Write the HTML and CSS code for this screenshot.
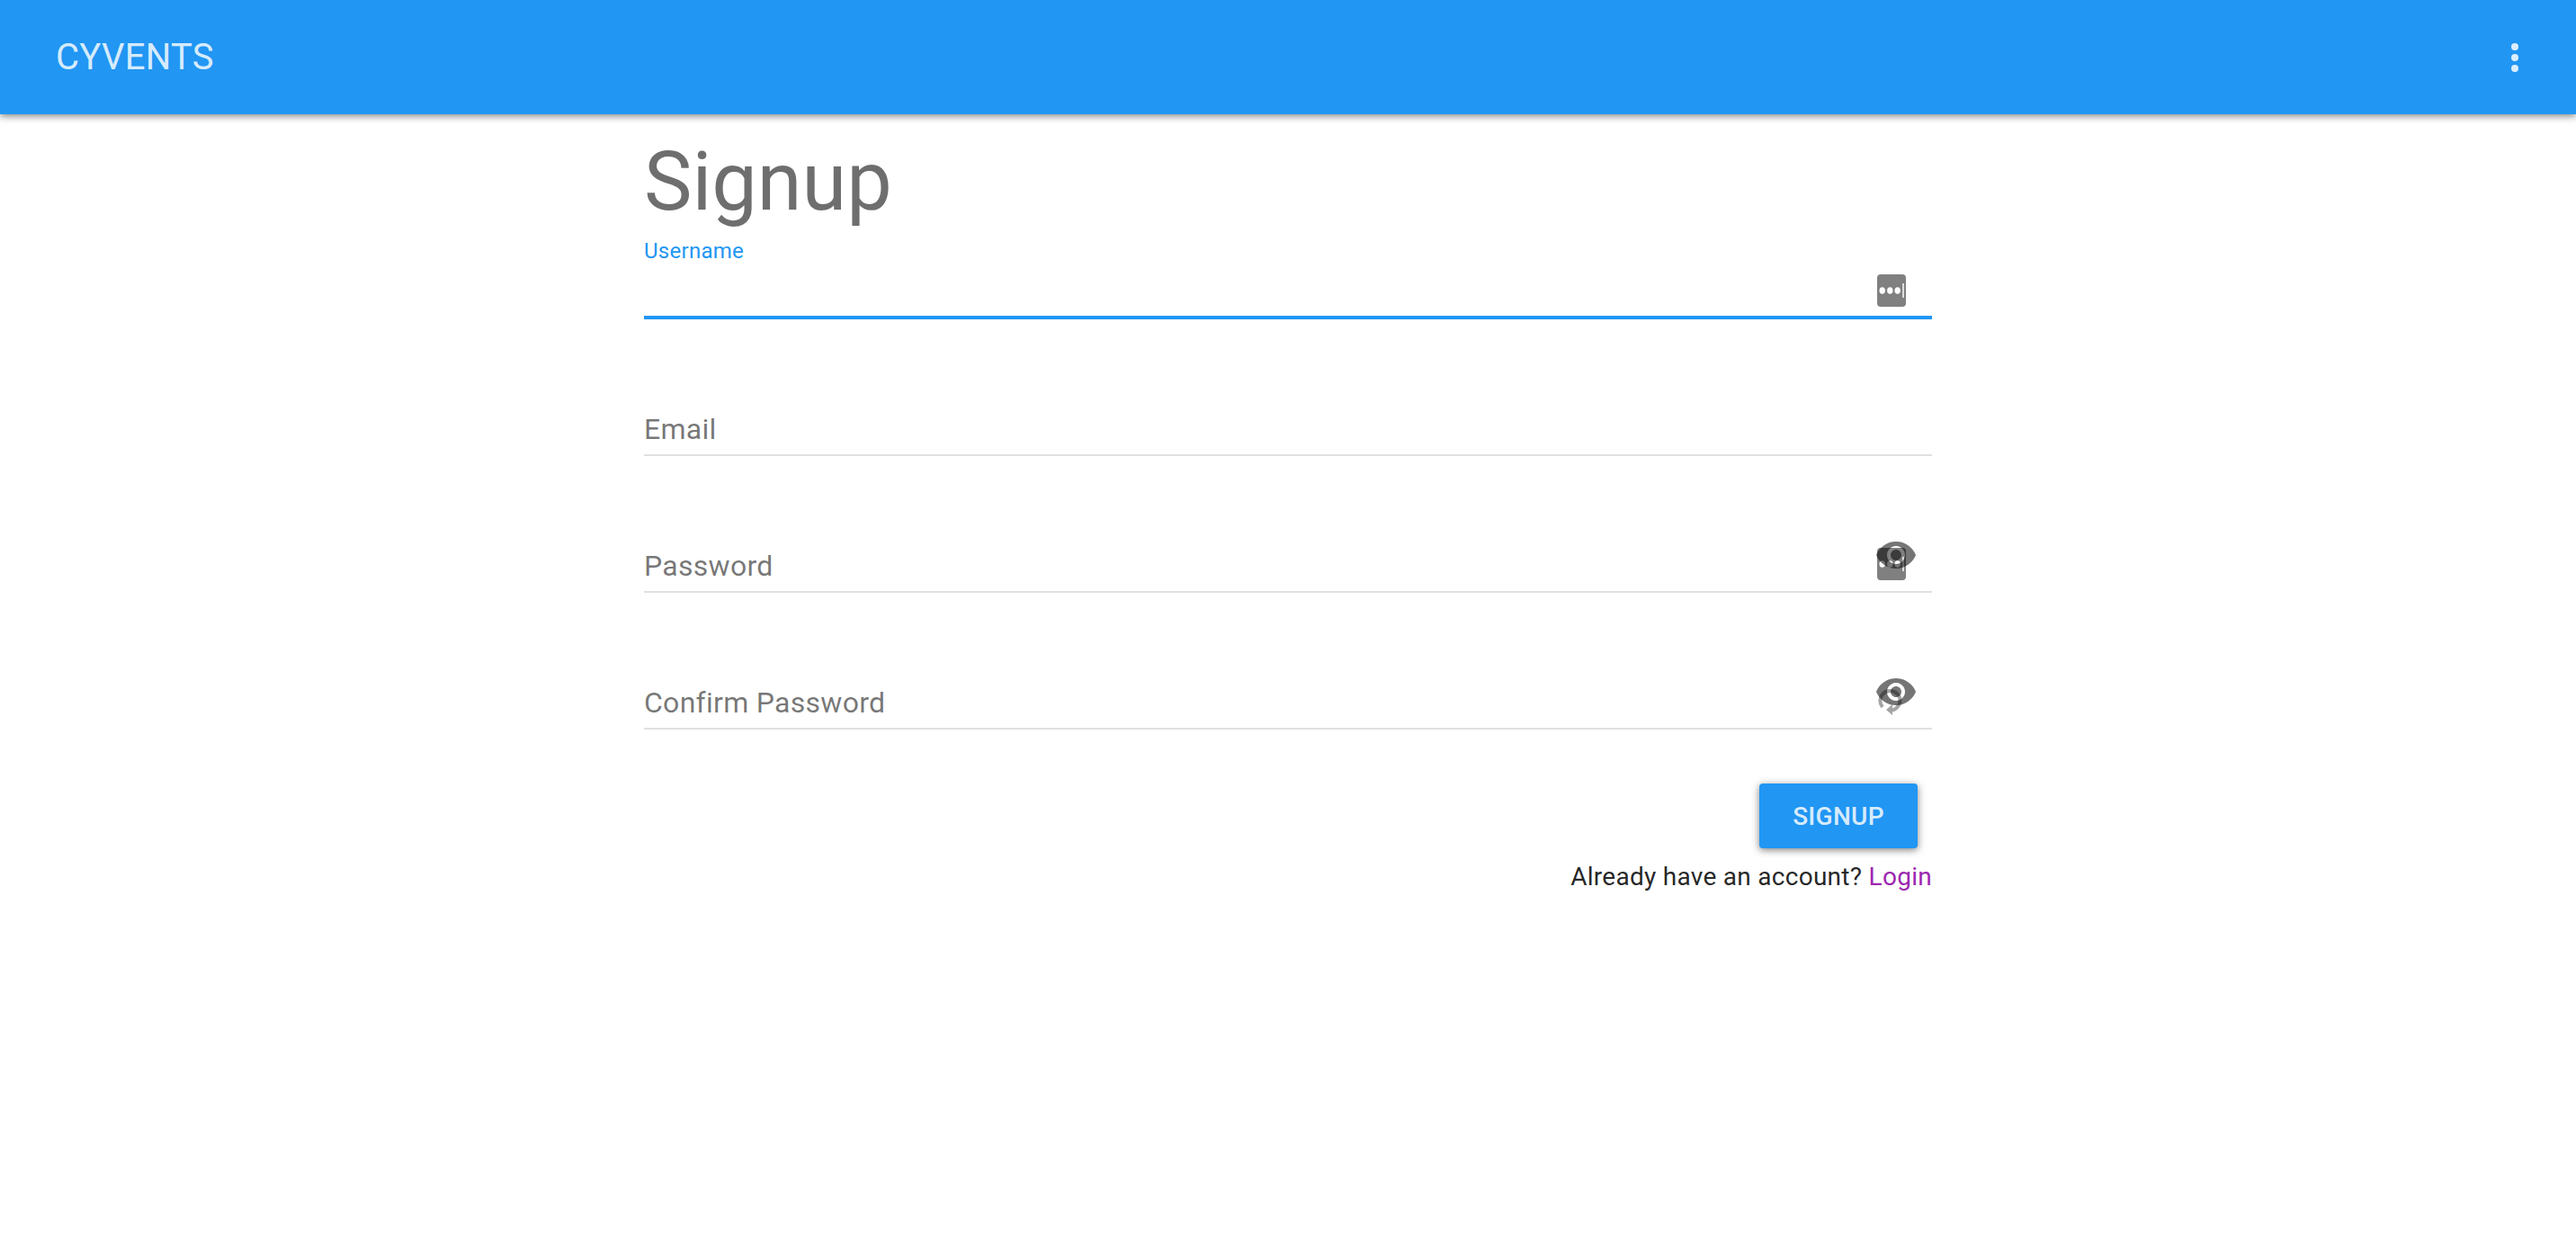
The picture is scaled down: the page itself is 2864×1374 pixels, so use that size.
FILE: index.html
```html
<!DOCTYPE html>
<html lang="en">
<head>
  <meta charset="utf-8">
  <meta name="viewport" content="width=device-width, initial-scale=1">
  <title>Cyvents</title>
  <link rel="stylesheet" href="styles.css">
</head>
<body>
  <header class="toolbar">
    <a class="brand" href="#">CYVENTS</a>
    <button class="icon-button" type="button" aria-label="Menu">
      <svg class="icon" viewBox="0 0 24 24" aria-hidden="true"><circle cx="12" cy="6" r="2"/><circle cx="12" cy="12" r="2"/><circle cx="12" cy="18" r="2"/></svg>
    </button>
  </header>
  <main class="content">
    <h1 class="title">Signup</h1>
    <form class="form">
      <div class="field field-active">
        <label class="label" for="username">Username</label>
        <input class="input" id="username" type="text">
        <svg class="manager" viewBox="0 0 32 36" aria-hidden="true"><rect width="32" height="36" rx="4" fill="#808080"/><g fill="#fff"><ellipse cx="5.700" cy="18" rx="3.200" ry="3.800"/><ellipse cx="14.300" cy="18" rx="3.200" ry="3.800"/><ellipse cx="22.700" cy="18" rx="3.200" ry="3.800"/></g><path d="M29 10v16" stroke="#ddd" stroke-width="2"/></svg>
      </div>
      <div class="field">
        <label class="label" for="email">Email</label>
        <input class="input" id="email" type="email">
      </div>
      <div class="field">
        <label class="label" for="password">Password</label>
        <input class="input" id="password" type="password">
        <svg class="manager" viewBox="0 0 32 36" aria-hidden="true"><rect width="32" height="36" rx="4" fill="#808080"/><g fill="#fff"><ellipse cx="5.700" cy="18" rx="3.200" ry="3.800"/><ellipse cx="14.300" cy="18" rx="3.200" ry="3.800"/><ellipse cx="22.700" cy="18" rx="3.200" ry="3.800"/></g><path d="M29 10v16" stroke="#ddd" stroke-width="2"/></svg>
        <button class="icon-button reveal" type="button" aria-label="Show password">
          <svg class="icon" viewBox="0 0 24 24" aria-hidden="true"><path d="M12 4.500C7 4.500 2.730 7.610 1 12c1.730 4.390 6 7.500 11 7.500s9.270-3.110 11-7.500c-1.730-4.390-6-7.500-11-7.500zM12 17c-2.760 0-5-2.240-5-5s2.240-5 5-5 5 2.240 5 5-2.240 5-5 5zm0-8c-1.660 0-3 1.340-3 3s1.340 3 3 3 3-1.340 3-3-1.340-3-3-3z"/></svg>
        </button>
      </div>
      <div class="field">
        <label class="label" for="confirm">Confirm Password</label>
        <input class="input" id="confirm" type="password">
        <svg class="manager" viewBox="0 0 32 36" aria-hidden="true"><path d="M6 25A11 11 0 1 1 25 21Q22 28 16 28.500" fill="none" stroke="#a4a4a4" stroke-width="4"/><path d="M10 28l7-6v12z" fill="#a4a4a4"/></svg>
        <button class="icon-button reveal" type="button" aria-label="Show confirmation">
          <svg class="icon" viewBox="0 0 24 24" aria-hidden="true"><path d="M12 4.500C7 4.500 2.730 7.610 1 12c1.730 4.390 6 7.500 11 7.500s9.270-3.110 11-7.500c-1.730-4.390-6-7.500-11-7.500zM12 17c-2.760 0-5-2.240-5-5s2.240-5 5-5 5 2.240 5 5-2.240 5-5 5zm0-8c-1.660 0-3 1.340-3 3s1.340 3 3 3 3-1.340 3-3-1.340-3-3-3z"/></svg>
        </button>
      </div>
      <button class="submit" type="submit">SIGNUP</button>
    </form>
    <p class="switch">Already have an account? <a class="link" href="#login">Login</a></p>
  </main>
</body>
</html>
```
FILE: styles.css
```css
* {
  box-sizing: border-box;
}

body {
  margin: 0;
  background: #fff;
  color: rgba(0, 0, 0, 0.87);
  font-family: Roboto, "Liberation Sans", sans-serif;
  font-size: 28px;
  letter-spacing: 0.01em;
}

.toolbar {
  display: flex;
  align-items: center;
  justify-content: space-between;
  height: 127px;
  padding: 0 44px 0 62px;
  background: #2196f3;
  color: rgba(255, 255, 255, 0.84);
  box-shadow: 0 2px 8px rgba(0, 0, 0, 0.5);
}

.brand {
  color: inherit;
  font-size: 40px;
  text-decoration: none;
}

.icon-button {
  display: block;
  padding: 0;
  border: 0;
  background: none;
  color: inherit;
}

.icon {
  display: block;
  width: 48px;
  height: 48px;
  fill: currentColor;
}

.content {
  width: 50%;
  margin: 0 auto;
  padding-top: 28px;
}

.title {
  margin: 0 0 16px;
  color: rgba(0, 0, 0, 0.57);
  font-size: 90px;
  font-weight: 400;
  line-height: 96px;
  letter-spacing: normal;
}

.form {
  display: flex;
  flex-direction: column;
  gap: 64px;
}

.field {
  position: relative;
  display: grid;
  height: 88px;
}

.label,
.input {
  grid-area: 1 / 1;
}

.label {
  align-self: end;
  padding-bottom: 8px;
  color: rgba(0, 0, 0, 0.54);
  font-size: 32px;
  line-height: 44px;
  pointer-events: none;
}

.input {
  width: 100%;
  padding: 24px 80px 0 0;
  border: 0;
  border-bottom: 2px solid #e0e0e0;
  outline: 0;
  background: none;
  color: inherit;
  font: inherit;
  font-size: 32px;
}

.field-active .label {
  align-self: start;
  padding: 0;
  color: #2196f3;
  font-size: 24px;
  line-height: 24px;
}

.field-active .input {
  border-bottom: 4px solid #2196f3;
}

.manager {
  position: absolute;
  right: 29px;
  bottom: 14px;
  width: 32px;
  height: 36px;
}

.reveal {
  position: absolute;
  right: 16px;
  bottom: 18px;
  color: rgba(0, 0, 0, 0.54);
}

.submit {
  align-self: flex-end;
  width: 176px;
  height: 72px;
  margin: -4px 16px 0 0;
  padding: 0;
  border: 0;
  border-radius: 4px;
  background: #2196f3;
  color: rgba(255, 255, 255, 0.84);
  box-shadow: 0 2px 8px rgba(0, 0, 0, 0.5);
  font: inherit;
  font-weight: 500;
  letter-spacing: inherit;
}

.switch {
  margin: 12px 0 0;
  line-height: 40px;
  text-align: right;
}

.link {
  color: #9c27b0;
  text-decoration: none;
}
```
